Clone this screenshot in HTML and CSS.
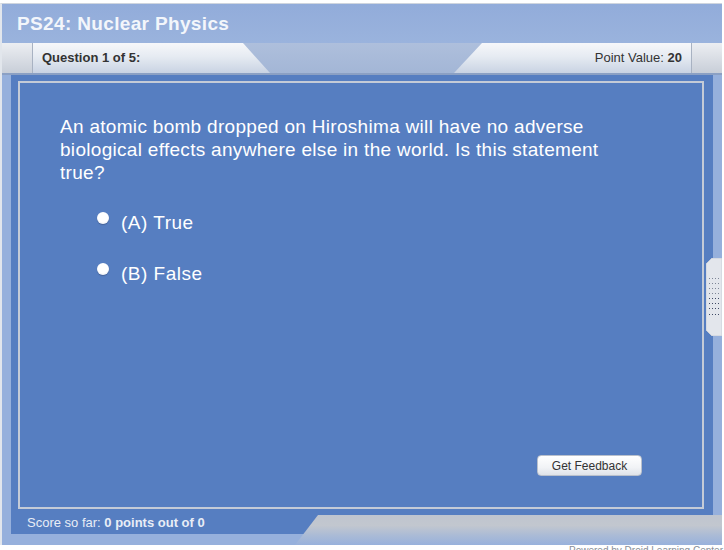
FILE: index.html
```html
<!DOCTYPE html>
<html lang="en">
<head>
  <meta charset="UTF-8">
  <title>PS24: Nuclear Physics</title>
  <link rel="stylesheet" href="styles.css">
</head>
<body>
  <div class="frame">
    <div class="header">PS24: Nuclear Physics</div>

    <div class="tabbar">
      <div class="tab tab-left">
        <div class="tab-cap"></div>
        <div class="tab-label"><b>Question 1 of 5:</b></div>
      </div>
      <div class="tab tab-right">
        <div class="tab-label">Point Value: <b>20</b></div>
        <div class="tab-cap"></div>
      </div>
    </div>

    <div class="main">
      <div class="panel">
        <p class="question">An atomic bomb dropped on Hiroshima will have no adverse biological effects anywhere else in the world. Is this statement true?</p>
        <div class="options">
          <label class="option"><span class="radio"></span>(A) True</label>
          <label class="option"><span class="radio"></span>(B) False</label>
        </div>
        <button class="feedback-button">Get Feedback</button>
      </div>
      <div class="score">Score so far: <b>0 points out of 0</b></div>
    </div>

    <!-- decorative strip bottom right -->
    <div class="bottom-band"></div>

    <!-- side handle -->
    <div class="handle">
      <svg width="16" height="78" viewBox="0 0 16 78">
        <path d="M6 0 H16 V78 H6 L0 72 V6 Z" fill="#e3e6ec" stroke="#c9ced8"/>
        <g fill="#7d8596">
          <rect x="3" y="20" width="1" height="1"/><rect x="6" y="20" width="1" height="1"/><rect x="9" y="20" width="1" height="1"/><rect x="12" y="20" width="1" height="1"/>
          <rect x="3" y="25" width="1" height="1"/><rect x="6" y="25" width="1" height="1"/><rect x="9" y="25" width="1" height="1"/><rect x="12" y="25" width="1" height="1"/>
          <rect x="3" y="30" width="1" height="1"/><rect x="6" y="30" width="1" height="1"/><rect x="9" y="30" width="1" height="1"/><rect x="12" y="30" width="1" height="1"/>
          <rect x="3" y="35" width="1" height="1"/><rect x="6" y="35" width="1" height="1"/><rect x="9" y="35" width="1" height="1"/><rect x="12" y="35" width="1" height="1"/>
        </g>
        <g fill="#3f4a66">
          <rect x="3" y="40" width="1" height="1"/><rect x="6" y="40" width="1" height="1"/><rect x="9" y="40" width="1" height="1"/><rect x="12" y="40" width="1" height="1"/>
          <rect x="3" y="45" width="1" height="1"/><rect x="6" y="45" width="1" height="1"/><rect x="9" y="45" width="1" height="1"/><rect x="12" y="45" width="1" height="1"/>
          <rect x="3" y="50" width="1" height="1"/><rect x="6" y="50" width="1" height="1"/><rect x="9" y="50" width="1" height="1"/><rect x="12" y="50" width="1" height="1"/>
          <rect x="3" y="56" width="1" height="1"/><rect x="6" y="56" width="1" height="1"/><rect x="9" y="56" width="1" height="1"/><rect x="12" y="56" width="1" height="1"/>
        </g>
      </svg>
    </div>
  </div>
  <div class="powered">Powered by Droid Learning Center</div>
</body>
</html>
```

FILE: styles.css
```css
body {
  margin: 0;
  font-family: "Liberation Sans", Arial, sans-serif;
  background-color: #ffffff;
  overflow: hidden;
}

.frame {
  position: relative;
  width: 720px;
  height: 541px;
  margin-top: 3px;
  border-top: 1px solid #cfd5de;
  border-left: 2px solid #e2e6ec;
  background-color: #96b0dc;
}

.header {
  height: 39px;
  line-height: 40px;
  padding-left: 15px;
  font-size: 19px;
  font-weight: bold;
  letter-spacing: 0.35px;
  color: #f3f6fb;
  background: linear-gradient(#92acda, #9ab3dd);
}

.tabbar {
  display: flex;
  justify-content: space-between;
  height: 30px;
  border-bottom: 2px solid #8ba0c4;
  background: linear-gradient(#aebfdc, #a3b6d6);
}

.tab {
  display: flex;
  width: 268px;
  height: 30px;
  background: linear-gradient(#f6f7fa, #e6ebf2 45%, #c9d3e3);
  font-size: 13px;
  color: #333333;
}

.tab-left {
  clip-path: polygon(0 0, 241px 0, 268px 100%, 0 100%);
}

.tab-right {
  justify-content: flex-end;
  clip-path: polygon(28px 0, 100% 0, 100% 100%, 0 100%);
}

.tab-cap {
  width: 30px;
  background: linear-gradient(#eceef2, #c8ced8);
}

.tab-left .tab-cap {
  border-right: 1px solid #a8b2c2;
}

.tab-right .tab-cap {
  border-left: 1px solid #a8b2c2;
}

.tab-label {
  line-height: 30px;
  padding: 0 9px;
}

.main {
  display: flex;
  flex-direction: column;
  height: 459px;
  margin: 0 9px;
  padding: 6px 9px 0 7px;
  box-sizing: border-box;
  background-color: #567ec1;
}

.panel {
  display: flex;
  flex-direction: column;
  height: 428px;
  border: 2px solid #c4cbd7;
  box-sizing: border-box;
  color: #ffffff;
}

.question {
  width: 560px;
  margin: 32px 0 0 40px;
  font-size: 19px;
  letter-spacing: 0.3px;
  line-height: 23px;
}

.options {
  display: flex;
  flex-direction: column;
  gap: 28px;
  margin: 27px 0 0 77px;
}

.option {
  display: flex;
  align-items: center;
  gap: 12px;
  height: 23px;
  font-size: 19px;
  letter-spacing: 0.5px;
  cursor: pointer;
}

.radio {
  width: 12px;
  height: 12px;
  margin-bottom: 10px;
  border-radius: 50%;
  background: radial-gradient(circle at 50% 40%, #ffffff 55%, #dcdfe4);
  box-shadow: 0 1px 1px rgba(40, 50, 80, 0.35);
}

.feedback-button {
  align-self: flex-end;
  margin: auto 60px 31px 0;
  width: 105px;
  height: 21px;
  padding: 0;
  border: 1px solid #b9c0cc;
  border-radius: 4px;
  background: linear-gradient(#ffffff, #f1f3f6 60%, #dfe3e9);
  font-family: "Liberation Sans", Arial, sans-serif;
  font-size: 12px;
  color: #333333;
  cursor: pointer;
}

.score {
  height: 25px;
  line-height: 27px;
  padding-left: 9px;
  font-size: 13px;
  color: #e8edf6;
}

.bottom-band {
  position: absolute;
  left: 293px;
  right: 0;
  top: 511px;
  height: 30px;
  clip-path: polygon(23px 0, 100% 0, 100% 100%, 0 100%);
  background: linear-gradient(#bfc5cf, #c2c7cf 35%, #a9bad6 70%, #98b1dc);
}

.handle {
  position: absolute;
  top: 254px;
  right: 0;
  width: 16px;
  height: 78px;
}

.handle svg {
  display: block;
}

.powered {
  padding-left: 569px;
  font-size: 10px;
  line-height: 12px;
  color: #8a8f98;
  white-space: nowrap;
}
```
